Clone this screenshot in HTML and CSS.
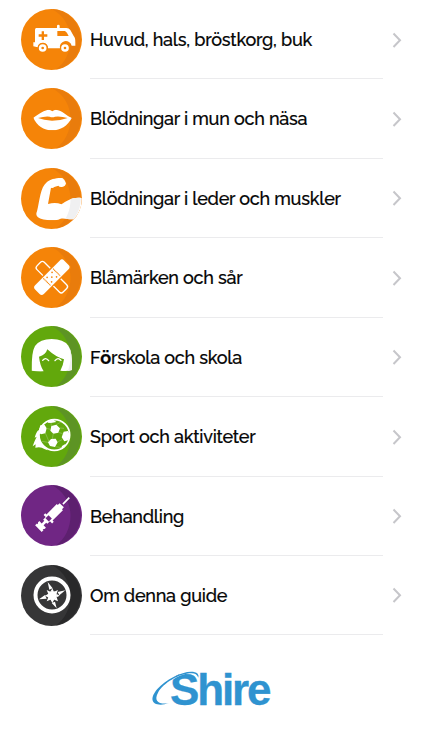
FILE: index.html
```html
<!DOCTYPE html>
<html lang="sv">
<head>
<meta charset="utf-8">
<title>Guide</title>
<link rel="stylesheet" href="styles.css">
</head>
<body>
<svg class="defs" aria-hidden="true">
  <defs>
    <path id="shade" d="M118 26C196 66 186 168 132 207A91.500 91.500 0 0 0 118 26Z"/>
    <path id="chev" d="M1.500 1.500 8 8.200 1.500 15"/>
    <clipPath id="lips"><path d="M63 114C76 106 90 94 105 91Q113 89 120 95Q127 89 134 91C150 94 163 108 178 115C166 139 144 152 120 152C94 152 73 137 63 114Z"/></clipPath>
    <clipPath id="arm"><path d="M104 65C112 57 132 52 150 53Q160 60 161 69Q160 78 149 80Q141 81 138 76L126 80Q121 85 116 82L107 131Q130 125 147 132C163 122 180 109 208 113Q210 151 184 177C165 178 151 170 138 178C118 182 88 180 76 170Q69 164 74 153C83 118 83 82 104 65Z"/></clipPath>
    <clipPath id="hair"><path d="M58 160Q57 105 68 86Q83 65 118 65Q154 65 168 85Q181 104 179 158Q165 163 144 160Q153 144 155 126Q130 119 105 96Q100 113 80 118Q83 145 94 162Q76 163 58 160Z"/></clipPath>
  </defs>
</svg>
<main class="list">
  <a class="row">
    <svg class="icon orange" viewBox="26 26 183 183"><circle cx="117.500" cy="117.500" r="91.500"/><use href="#shade" class="shade"/>
      <g class="white"><path d="M72 83H162Q170 83 174 89L184 107Q189 111 189 126V136H178A15 15 0 0 0 143 144H107A15 15 0 0 0 76 141L63 138V126H68V89Q68 83 72 83Z"/><rect x="134" y="73" width="8" height="13" rx="4"/></g>
      <g class="base"><circle cx="91" cy="143" r="15"/><circle cx="158" cy="143" r="15"/></g>
      <g class="white"><circle cx="91" cy="143" r="11.500"/><circle cx="158" cy="143" r="11.500"/></g>
      <g class="base"><path d="M135 92H158Q164 95 169 107H135ZM88 93H95V102H105V109H95V119H88V109H79V102H88Z"/><circle cx="91" cy="143" r="4"/><circle cx="158" cy="143" r="4"/></g></svg>
    <span class="label">Huvud, hals, bröstkorg, buk</span><svg class="chev" viewBox="0 0 10 17"><use href="#chev"/></svg>
  </a>
  <a class="row">
    <svg class="icon orange" viewBox="26 25 183 183"><g transform="translate(0 -1)"><circle cx="117.500" cy="117.500" r="91.500"/><use href="#shade" class="shade"/></g>
      <g clip-path="url(#lips)"><path class="white" d="M0 0H240V240H0Z"/><use href="#shade" class="pale"/></g><path class="base" d="M77 115Q99 109 112 111Q120 114 128 111Q145 109 166 115Q145 123 119 123Q94 122 77 115Z"/></svg>
    <span class="label">Blödningar i mun och näsa</span><svg class="chev" viewBox="0 0 10 17"><use href="#chev"/></svg>
  </a>
  <a class="row">
    <svg class="icon orange" viewBox="26 23 183 183"><g transform="translate(0 -3)"><circle cx="117.500" cy="117.500" r="91.500"/><use href="#shade" class="shade"/></g>
      <g clip-path="url(#arm)"><path class="white" d="M0 0H240V240H0Z"/><use href="#shade" class="pale"/></g></svg>
    <span class="label">Blödningar i leder och muskler</span><svg class="chev" viewBox="0 0 10 17"><use href="#chev"/></svg>
  </a>
  <a class="row">
    <svg class="icon orange" viewBox="26 22 183 183"><g transform="translate(0 -4)"><circle cx="117.500" cy="117.500" r="91.500"/><use href="#shade" class="shade"/></g>
      <rect class="outline" x="63" y="97" width="111" height="31" rx="8" transform="rotate(45 118.500 112.500)"/>
      <g transform="rotate(-45 118.500 112.500)"><rect class="band-gap" x="54" y="90" width="129" height="45" rx="11"/><rect class="white" x="57" y="94" width="123" height="37" rx="9"/><path class="stitch" d="M98 97V128M139 97V128"/><g class="base"><circle cx="108" cy="103" r="2.500"/><circle cx="129" cy="103" r="2.500"/><circle cx="118.500" cy="112.500" r="2.500"/><circle cx="108" cy="122" r="2.500"/><circle cx="129" cy="122" r="2.500"/></g></g></svg>
    <span class="label">Blåmärken och sår</span><svg class="chev" viewBox="0 0 10 17"><use href="#chev"/></svg>
  </a>
  <a class="row">
    <svg class="icon green" viewBox="26 26 183 183"><circle cx="117.500" cy="117.500" r="91.500"/><use href="#shade" class="shade"/>
      <g clip-path="url(#hair)"><path class="white" d="M0 0H240V240H0Z"/><use href="#shade" class="pale"/></g><path class="smile" d="M91 129Q100 118 109 130M128 130Q137 118 146 129"/></svg>
    <span class="label">F<b>ö</b>rskola och skola</span><svg class="chev" viewBox="0 0 10 17"><use href="#chev"/></svg>
  </a>
  <a class="row">
    <svg class="icon green" viewBox="26 24 183 183"><g transform="translate(0 -2)"><circle cx="117.500" cy="117.500" r="91.500"/><use href="#shade" class="shade"/></g>
      <path class="white" d="M79 96Q72 101 67 119L73 116Q67 127 61 145L70 139L69 149Q86 145 96 153L106 157L84 130Z"/><circle class="base" cx="126" cy="111" r="46"/><circle class="ball" cx="126" cy="111" r="46"/>
      <g class="white"><path d="M117 84 132 80 143 91 138 104 123 107 114 98ZM116 123 130 122 136 133 128 147 113 144 107 133ZM84 82 97 81 103 91 99 106 86 109 78 103ZM154 101 167 99 173 111 168 127 156 130 148 118ZM108 68 123 65 132 72 116 75 106 74ZM149 144 159 138 157 148 146 154Z"/></g>
      <path class="seam" d="M101 91 115 94M117 84 116 74M138 103 151 107M123 106 120 123M99 105 110 131M135 132 149 125M143 90 155 91M107 133 88 130M129 146 148 149M132 80 146 72"/></svg>
    <span class="label">Sport och aktiviteter</span><svg class="chev" viewBox="0 0 10 17"><use href="#chev"/></svg>
  </a>
  <a class="row">
    <svg class="icon purple" viewBox="26 25 183 183"><g transform="translate(0 -1)"><circle cx="117.500" cy="117.500" r="91.500"/><use href="#shade" class="shade"/></g>
      <g transform="translate(144 90) rotate(45)"><path class="white" d="M-2.500-38H2.500V-11H-2.500ZM-9-6H9V2H13V46H18V53H9V64H4V75H14V81L10 85H14V93H-14V85H-10L-14 81V75H-4V64H-9V53H-18V46H-13V2H-9Z"/><path class="base" d="M-7 43H7V56H-7Z"/></g></svg>
    <span class="label">Behandling</span><svg class="chev" viewBox="0 0 10 17"><use href="#chev"/></svg>
  </a>
  <a class="row">
    <svg class="icon dark" viewBox="26 27 183 183"><g transform="translate(0 1)"><circle cx="117.500" cy="117.500" r="91.500"/><use href="#shade" class="shade"/></g>
      <circle class="ring" cx="119" cy="117" r="49.500"/><g class="white"><circle cx="120" cy="119" r="14"/><path d="M106 78 121 97 111 101ZM159 103 141 118 136 108ZM133 157 118 141 128 137ZM80 130 98 117 103 128ZM120 97 124 106 115 106ZM142 119 133 124 133 114ZM120 141 115 132 125 132ZM98 119 107 114 107 124ZM103 102 114 107 108 114ZM137 102 132 114 125 107ZM137 136 126 131 133 124ZM103 136 108 124 114 131Z"/></g></svg>
    <span class="label">Om denna guide</span><svg class="chev" viewBox="0 0 10 17"><use href="#chev"/></svg>
  </a>
</main>
<footer class="brand">
  <svg class="logo" viewBox="0 0 405 180" role="img" aria-label="Shire">
    <text class="wordmark" x="75" y="136">Shire</text>
    <path class="swoosh-gap" d="M57 127C28 125 38 91 72 65C99 43 136 30 163 43"/>
    <path class="swoosh" d="M72 130C22 144 9 119 37 87C68 53 135 22 158 41Q162 45 160 53Q155 40 140 40C102 40 55 70 39 98C26 122 39 134 72 130Z"/>
  </svg>
</footer>
</body>
</html>
```
FILE: styles.css
```css
* { box-sizing: border-box; }
body {
  margin: 0;
  width: 422px;
  height: 750px;
  overflow: hidden;
  background: #fff;
  color: #050505;
  font-family: Raleway, Lato, sans-serif;
}
.defs { display: block; width: 0; height: 0; }
.list { padding: 0 19px 0 21px; }
.row {
  display: grid;
  grid-template-columns: 61px 293px 1fr;
  column-gap: 8px;
  height: 79.43px;
  align-items: start;
}
.icon { display: block; width: 61px; height: 61px; margin-top: 8.7px; }
.label {
  height: 100%;
  border-bottom: 1px solid #ebebed;
  padding-top: 3px;
  font-size: 18px;
  font-weight: 500;
  letter-spacing: -0.235px;
  line-height: 73px;
  white-space: nowrap;
  -webkit-text-stroke: 0.2px #050505;
}
.chev { width: 10px; height: 17px; margin: 31.5px 0 0 1px; justify-self: start; fill: none; stroke: #c6c6ca; stroke-width: 2; }
.orange { --base: #f58408; --shade: #e97c0c; }
.green { --base: #62a80c; --shade: #5d9424; }
.purple { --base: #702684; --shade: #5d206f; }
.dark { --base: #363637; --shade: #29292a; }
.icon circle, .base { fill: var(--base); }
.shade { fill: var(--shade); }
.white, .icon .white circle { fill: #fff; }
.pale { fill: #f0f0f1; }
.outline { fill: none; stroke: #fff; stroke-width: 4; }
.band-gap { fill: var(--base); }
.stitch { fill: none; stroke: var(--base); stroke-width: 3; stroke-dasharray: 4 1; }
.smile { fill: none; stroke: #fff; stroke-width: 4; stroke-linecap: round; }
.icon .ball { fill: none; stroke: #fff; stroke-width: 5; }
.seam { fill: none; stroke: #a9cf79; stroke-width: 1.5; }
.icon .ring { fill: none; stroke: #fff; stroke-width: 12; }
.brand { display: flex; justify-content: center; padding-top: 24.5px; }
.logo { width: 135px; height: 60px; margin-left: 3px; }
.wordmark { font: bold 132px "Liberation Sans", sans-serif; letter-spacing: -6.5px; fill: #2f93d0; stroke: #2f93d0; stroke-width: 1; }
.swoosh { fill: #2f93d0; }
.swoosh-gap { fill: none; stroke: #fff; stroke-width: 4; }
```
